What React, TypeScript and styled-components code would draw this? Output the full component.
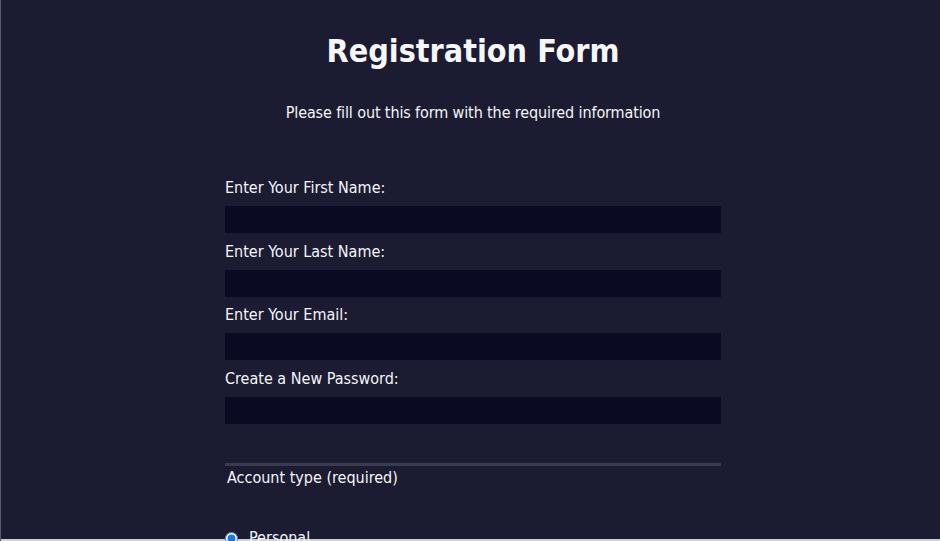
import React from 'react'
import styled, { createGlobalStyle } from 'styled-components'

const GlobalStyle = createGlobalStyle`
  html, body {
    margin: 0;
    padding: 0;
    overflow: hidden;
  }
  body {
    background-color: #1b1b32;
    color: #f5f6f7;
    font-family: 'DejaVu Sans Condensed', 'DejaVu Sans', Tahoma, sans-serif;
    font-stretch: condensed;
    font-size: 16px;
  }
`

const Page = styled.div`
  height: 100vh;
  box-sizing: border-box;
  padding-left: 6px;
  overflow: hidden;
  box-shadow: inset 1px 0 0 #5c5c66, inset 0 -2px 0 #cfd0d4;
`

const Title = styled.h1`
  margin: 33px auto;
  text-align: center;
  font-size: 32px;
  line-height: 37px;
  font-weight: 700;
`

const Intro = styled.p`
  margin: 0 auto 16px;
  text-align: center;
  line-height: 19px;
  letter-spacing: -0.12px;
`

const Form = styled.form`
  width: 496px;
  margin: 0 auto;
`

const Fieldset = styled.fieldset<{ $divider?: boolean }>`
  margin: 0;
  border: none;
  padding: ${({ $divider }) => ($divider ? '31.5px 0 39px' : '0')};
  border-bottom: ${({ $divider }) => ($divider ? '3px solid #3b3b4f' : 'none')};
  display: flex;
  flex-direction: column;
`

const Field = styled.label`
  display: flex;
  flex-direction: column;
  margin: 8.67px 0 0;
  line-height: 20px;
`

const TextInput = styled.input`
  margin: 8px 0 0;
  height: 27px;
  box-sizing: border-box;
  width: 100%;
  background-color: #0a0a23;
  border: 1px solid #0a0a23;
  color: #ffffff;
  outline: none;
`

const Legend = styled.div`
  padding: 2px 2px 0;
  line-height: 20px;
`

const RadioRow = styled.label`
  display: flex;
  align-items: center;
  gap: 11px;
  margin-top: 40px;
  line-height: 20px;
`

const Radio = styled.input`
  margin: 0;
  width: 13px;
  height: 13px;
  accent-color: #1a73e8;
`

const fields = [
  { label: 'Enter Your First Name:', type: 'text' },
  { label: 'Enter Your Last Name:', type: 'text' },
  { label: 'Enter Your Email:', type: 'email' },
  { label: 'Create a New Password:', type: 'password' },
]

export default function App() {
  return (
    <Page>
      <GlobalStyle />
      <Title>Registration Form</Title>
      <Intro>Please fill out this form with the required information</Intro>
      <Form onSubmit={(e) => e.preventDefault()}>
        <Fieldset $divider>
          {fields.map((f) => (
            <Field key={f.label}>
              {f.label}
              <TextInput type={f.type} />
            </Field>
          ))}
        </Fieldset>
        <Fieldset>
          <Legend>Account type (required)</Legend>
          <RadioRow>
            <Radio type="radio" name="account-type" defaultChecked />
            Personal
          </RadioRow>
        </Fieldset>
      </Form>
    </Page>
  )
}
